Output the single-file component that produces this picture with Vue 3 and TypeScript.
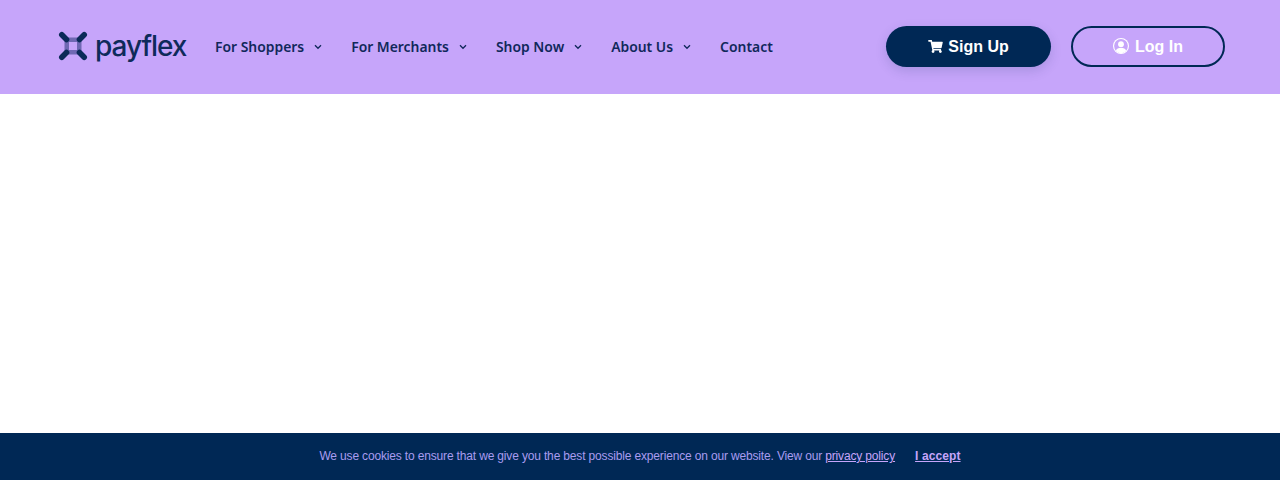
<script setup lang="ts">
interface NavItem { label: string; caret: boolean }
const items: NavItem[] = [
  { label: 'For Shoppers', caret: true },
  { label: 'For Merchants', caret: true },
  { label: 'Shop Now', caret: true },
  { label: 'About Us', caret: true },
  { label: 'Contact', caret: false },
]
</script>

<template>
  <div class="page">
    <header class="header">
      <a class="logo">
        <svg class="mark" width="30" height="30" viewBox="0 0 30 30" aria-hidden="true">
          <rect x="6.5" y="6.5" width="17" height="17" fill="#4a4f94" opacity="0.7" />
          <rect x="11" y="11" width="8" height="8" fill="#c6a5fa" />
          <path d="M3.8 3.8 L8.5 8.5 M26.2 3.8 L21.5 8.5 M3.8 26.2 L8.5 21.5 M26.2 26.2 L21.5 21.5" stroke="#0b2a58" stroke-width="5.6" stroke-linecap="round" />
        </svg>
        <span class="word">payflex</span>
      </a>
      <nav class="nav">
        <a v-for="item in items" :key="item.label" class="link">
          {{ item.label }}
          <svg v-if="item.caret" class="caret" width="8" height="6" viewBox="0 0 8 6" aria-hidden="true">
            <path d="M1 1.3 L4 4.3 L7 1.3" fill="none" stroke="#10285a" stroke-width="1.3" />
          </svg>
        </a>
      </nav>
      <div class="actions">
        <a class="btn solid">
          <svg width="15" height="13" viewBox="0 0 576 512" fill="#fff" aria-hidden="true">
            <path d="M528 301 575 93c3-15-8-29-23-29H158l-9-47C147 7 138 0 127 0H24C11 0 0 11 0 24v16c0 13 11 24 24 24h70l70 343c-17 10-28 28-28 49 0 31 25 56 56 56s56-25 56-56c0-16-6-30-17-40h210c-11 10-17 24-17 40 0 31 25 56 56 56s56-25 56-56c0-22-13-41-32-50l5-24c3-15-8-29-23-29H211l-7-32h301c11 0 21-8 23-19z" />
          </svg>
          <span class="label">Sign Up</span>
        </a>
        <a class="btn outline">
          <svg width="16" height="16" viewBox="0 0 16 16" aria-hidden="true">
            <circle cx="8" cy="8" r="8" fill="#fff" />
            <circle cx="8" cy="8" r="6.9" fill="#c6a5fa" />
            <circle cx="8" cy="6.2" r="2.9" fill="#fff" />
            <path d="M2.9 12.7 C3.6 10.5 5.4 9.8 8 9.8 C10.6 9.8 12.4 10.5 13.1 12.7 C11.8 14.2 10 15 8 15 C6 15 4.2 14.2 2.9 12.7 Z" fill="#fff" />
          </svg>
          <span class="label">Log In</span>
        </a>
      </div>
    </header>
    <main class="content"></main>
    <div class="cookie">
      <span class="notice">We use cookies to ensure that we give you the best possible experience on our website. View our <a class="policy">privacy policy</a></span>
      <a class="accept">I accept</a>
    </div>
  </div>
</template>

<style scoped>
.page {
  height: 480px;
  display: flex;
  flex-direction: column;
  background: #fff;
  overflow: hidden;
}
.header {
  height: 94px;
  flex: none;
  box-sizing: border-box;
  display: flex;
  align-items: center;
  padding: 0 55px 2px 58px;
  background: #c6a5fa;
}
.logo {
  display: flex;
  align-items: center;
  gap: 7px;
  width: 157px;
  flex: none;
}
.mark {
  flex: none;
}
.word {
  font-family: Inter, "Liberation Sans", sans-serif;
  font-size: 28px;
  font-weight: 450;
  letter-spacing: -1.05px;
  line-height: 30px;
  color: #0e2a5a;
}
.nav {
  display: flex;
  align-items: center;
  gap: 29px;
}
.link {
  display: flex;
  align-items: center;
  gap: 10px;
  font-family: "Noto Sans", sans-serif;
  font-weight: 600;
  font-size: 13.9px;
  color: #10285a;
}
.caret {
  margin-top: 2px;
}
.actions {
  margin-left: auto;
  display: flex;
  align-items: center;
  gap: 20px;
}
.btn {
  display: flex;
  align-items: center;
  justify-content: center;
  gap: 5px;
  height: 41px;
  box-sizing: border-box;
  border-radius: 21px;
  font-family: "Liberation Sans", Arial, sans-serif;
  font-weight: 700;
  font-size: 16px;
  color: #fff;
}
.label {
  padding-top: 2px;
}
.solid {
  width: 165px;
  background: #002855;
  box-shadow: 0 4px 12px rgba(0, 40, 85, 0.15);
}
.outline {
  width: 154px;
  border: 2px solid #002855;
  gap: 6px;
}
.content {
  flex: 1;
}
.cookie {
  height: 47px;
  flex: none;
  box-sizing: border-box;
  padding-bottom: 1px;
  display: flex;
  align-items: center;
  justify-content: center;
  gap: 20px;
  background: #002855;
  color: #a99cf0;
  font-family: "Liberation Sans", Arial, sans-serif;
  font-size: 12px;
}
.notice {
  letter-spacing: -0.16px;
}
.policy {
  text-decoration: underline;
  color: #c6a5fa;
}
.accept {
  font-weight: 700;
  letter-spacing: 0.1px;
  text-decoration: underline;
  color: #c6a5fa;
}
</style>
